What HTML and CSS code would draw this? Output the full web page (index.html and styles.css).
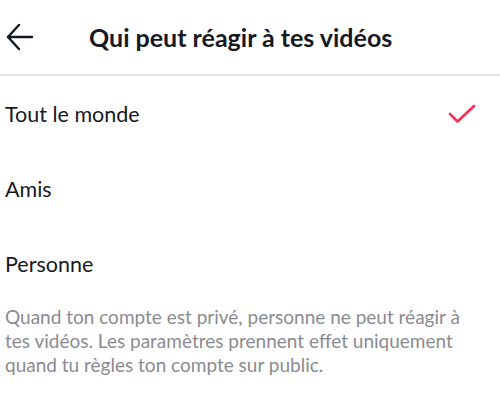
FILE: index.html
```html
<!DOCTYPE html>
<html lang="fr">
<head>
    <meta charset="UTF-8">
    <meta name="viewport" content="width=device-width, initial-scale=1.0">
    <title>Qui peut réagir à tes vidéos</title>
    <link rel="stylesheet" href="styles.css">
</head>
<body>
    <div class="header">
        <button class="back-btn" aria-label="Retour">
            <svg width="28" height="28" viewBox="0 0 28 28" fill="none" stroke="#161823" stroke-width="2.4" stroke-linecap="round" stroke-linejoin="round">
                <path d="M26 14H2"/>
                <path d="M13 2L2 14l11 12"/>
            </svg>
        </button>
        <h1>Qui peut réagir à tes vidéos</h1>
    </div>

    <ul class="options">
        <li class="option selected">
            <span>Tout le monde</span>
            <svg class="check" width="28" height="20" viewBox="0 0 28 20" fill="none" stroke="#fe2c55" stroke-width="2.6" stroke-linecap="round" stroke-linejoin="round">
                <path d="M2 10l7.5 7.5L26 2"/>
            </svg>
        </li>
        <li class="option"><span>Amis</span></li>
        <li class="option"><span>Personne</span></li>
    </ul>

    <p class="note">Quand ton compte est privé, personne ne peut réagir à tes vidéos. Les paramètres prennent effet uniquement quand tu règles ton compte sur public.</p>
</body>
</html>
```

FILE: styles.css
```css
body {
    margin: 0;
    font-family: "Lato", "Open Sans", sans-serif;
    background-color: white;
    color: #161823;
}
.header {
    display: flex;
    align-items: center;
    height: 74px;
    border-bottom: 2px solid #e3e3e4;
}
.back-btn {
    display: flex;
    background: none;
    border: none;
    padding: 0 0 0 6px;
    margin-right: 55px;
    cursor: pointer;
}
h1 {
    margin: 0;
    font-size: 25px;
    font-weight: 700;
}
.options {
    list-style: none;
    margin: 0;
    padding: 0;
}
.option {
    display: flex;
    align-items: center;
    justify-content: space-between;
    height: 75px;
    padding: 0 24px 0 5px;
    font-size: 21.5px;
}
.note {
    margin: 0;
    padding: 4px 30px 0 5px;
    font-size: 19px;
    line-height: 24px;
    color: #8a8b91;
}
```
